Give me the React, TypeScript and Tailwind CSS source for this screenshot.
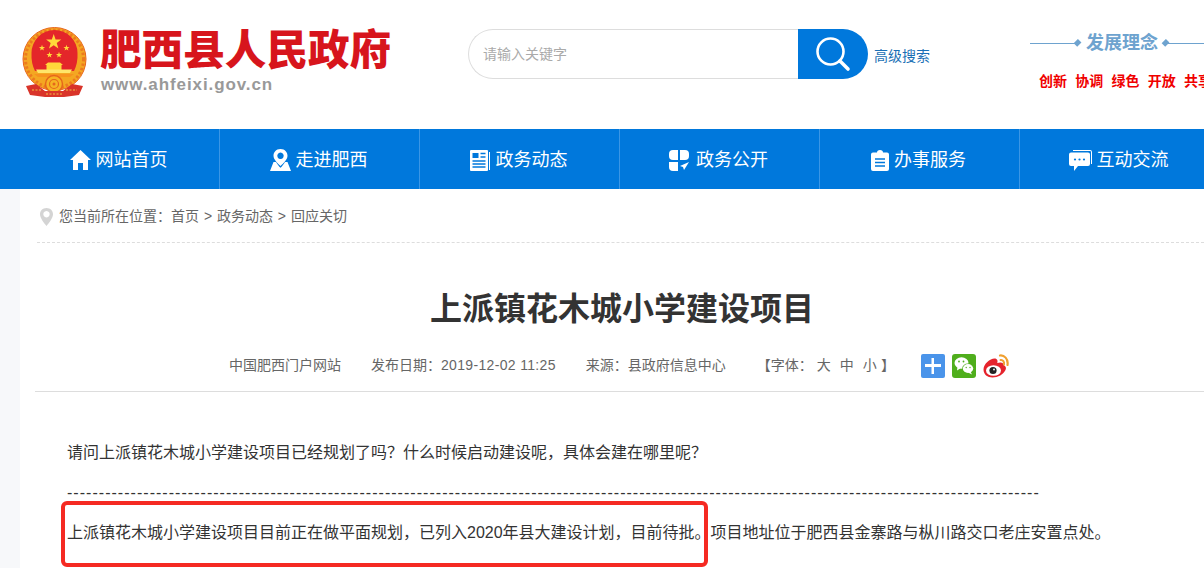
import React from "react";

const Star = ({ x, y, r, rot = 0 }: { x: number; y: number; r: number; rot?: number }) => {
  const pts: string[] = [];
  for (let i = 0; i < 10; i++) {
    const a = (Math.PI / 5) * i - Math.PI / 2 + rot;
    const rr = i % 2 === 0 ? r : r * 0.4;
    pts.push(`${(x + rr * Math.cos(a)).toFixed(2)},${(y + rr * Math.sin(a)).toFixed(2)}`);
  }
  return <polygon points={pts.join(" ")} fill="#ffd83a" />;
};

const Emblem = () => (
  <svg width="66" height="70" viewBox="0 0 66 70" className="shrink-0">
    <circle cx="32.5" cy="32" r="31.5" fill="#f4a722" stroke="#e8641c" strokeWidth="1" />
    <circle cx="32.5" cy="32" r="29" fill="none" stroke="#ec7a1e" strokeWidth="3" strokeDasharray="2.5 2" />
    <path d="M9.5 26 A23 23 0 0 1 55.5 26 Q56 36 52 44 H13 Q9 36 9.5 26Z" fill="#e4262a" />
    <Star x={31.7} y={15} r={8} />
    <Star x={20} y={21} r={3.2} />
    <Star x={44.5} y={21} r={3.2} />
    <Star x={27.5} y={28} r={3.2} />
    <Star x={37} y={28} r={3.2} />
    <path d="M23 38 L26 35.5 L38 35.5 L41 38 L39.5 38 V43 H24.5 V38Z" fill="#ffd83a" />
    <path d="M14 42.5 H50 L48 46 H16Z" fill="#ffe56a" />
    <path d="M12 47 H52 L48 50 H16Z" fill="#f7921e" />
    <circle cx="32" cy="57" r="8.5" fill="#f6b324" stroke="#e5661c" strokeWidth="1.5" />
    <circle cx="32" cy="57" r="4.5" fill="none" stroke="#e5661c" strokeWidth="1.2" />
    <circle cx="32" cy="57" r="1.5" fill="#e5661c" />
    <path d="M4 59 L14 57 L23 64 L41 64 L50 57 L61 59 L57 68 L42 70 L23 70 L8 68Z" fill="#d9342a" />
    <path d="M10 63 H20 M44 63 H55 M24 67 H40" stroke="#f4c040" strokeWidth="1.2" strokeDasharray="2 1.5" />
  </svg>
);

const SearchIcon = () => (
  <svg width="36" height="36" viewBox="0 0 36 36" fill="none" stroke="#fff">
    <circle cx="15.5" cy="15.5" r="13" strokeWidth="2.6" />
    <path d="M25 25 L33 33" strokeWidth="3.6" strokeLinecap="round" />
  </svg>
);

const Home = () => (
  <svg width="21" height="20" viewBox="0 0 21 20" fill="#fff">
    <path d="M10.5 0 L21 10 L18 10 V20 H13 V13 H8 V20 H3 V10 H0Z" />
  </svg>
);

const Pin = () => (
  <svg width="21" height="22" viewBox="0 0 21 22" fill="#fff">
    <path fillRule="evenodd" d="M10.5 0 C5.8 0 3.5 3.5 3.5 6.8 C3.5 10.5 8 15 10.5 17 C13 15 17.5 10.5 17.5 6.8 C17.5 3.5 15.2 0 10.5 0Z M10.5 3.6 A3.2 3.2 0 1 1 10.49 3.6Z" />
    <path d="M3.5 13 L0 22 H21 L17.5 13 L15 13 C13.5 15.5 12 17.5 10.5 18.8 C9 17.5 7.5 15.5 6 13Z" />
  </svg>
);

const News = () => (
  <svg width="20" height="21" viewBox="0 0 20 21">
    <path d="M19 2 H20 V20 H19Z" fill="#fff" />
    <rect x="0" y="0" width="18" height="21" rx="1" fill="#fff" />
    <rect x="2.5" y="3" width="6" height="5" fill="#0078dc" />
    <path d="M10.5 3.5 H15.5 M10.5 7 H15.5 M2.5 11 H15.5 M2.5 14 H15.5 M2.5 17 H15.5" stroke="#0078dc" strokeWidth="1.4" />
  </svg>
);

const Blocks = () => (
  <svg width="20" height="21" viewBox="0 0 20 21" fill="#fff">
    <path d="M4 0 H9 V10 H4 A4 4 0 0 1 0 6 V4 A4 4 0 0 1 4 0Z" />
    <path d="M11 0 H16 A4 4 0 0 1 20 4 V6 A4 4 0 0 1 16 10 H11Z" />
    <path d="M0 12 H9 V21 H4 A4 4 0 0 1 0 17Z" />
    <path d="M20 12 L11 16 L14 17 L15 20Z" />
  </svg>
);

const Clip = () => (
  <svg width="18" height="21" viewBox="0 0 18 21">
    <path d="M2 2.5 H6 A3 2.5 0 0 1 12 2.5 H16 A2 2 0 0 1 18 4.5 V19 A2 2 0 0 1 16 21 H2 A2 2 0 0 1 0 19 V4.5 A2 2 0 0 1 2 2.5Z" fill="#fff" />
    <path d="M4 9 H14 M4 12.5 H14 M4 16 H14" stroke="#0078dc" strokeWidth="1.4" />
  </svg>
);

const Chat = () => (
  <svg width="23" height="21" viewBox="0 0 23 21" fill="#fff">
    <path d="M4 0 H21 A2 2 0 0 1 23 2 V14 H22 V2 A1 1 0 0 0 21 1 H4Z" />
    <path d="M2 2.5 H19 A2 2 0 0 1 21 4.5 V14 A2 2 0 0 1 19 16 H9 L5 21 V16 H2 A2 2 0 0 1 0 14 V4.5 A2 2 0 0 1 2 2.5Z" />
    <circle cx="6" cy="9.5" r="1.1" fill="#0078dc" />
    <circle cx="10.5" cy="9.5" r="1.1" fill="#0078dc" />
    <circle cx="15" cy="9.5" r="1.1" fill="#0078dc" />
  </svg>
);

const LocationGray = () => (
  <svg width="13" height="18" viewBox="0 0 13 18">
    <path fillRule="evenodd" d="M6.5 0 C2.6 0 0 2.8 0 6.2 C0 10 4 15 6.5 18 C9 15 13 10 13 6.2 C13 2.8 10.4 0 6.5 0Z M6.5 3 A3.2 3.2 0 1 1 6.49 3Z" fill="#d4d4d4" />
  </svg>
);

const Share = () => (
  <svg width="24" height="24" viewBox="0 0 24 24">
    <rect width="24" height="24" rx="2" fill="#4a94ea" />
    <path d="M10.5 4 H13 V10 H20 V13 H13 V20 H10.5 V13 H4 V10 H10.5Z" fill="#fff" />
  </svg>
);

const Wechat = () => (
  <svg width="24" height="24" viewBox="0 0 24 24">
    <rect width="24" height="24" rx="3" fill="#4fae1c" />
    <ellipse cx="9.5" cy="9" rx="7" ry="5.8" fill="#fff" />
    <path d="M5.5 12.5 L5 16.5 L9 14Z" fill="#fff" />
    <ellipse cx="16" cy="14.5" rx="5.8" ry="4.9" fill="#4fae1c" />
    <ellipse cx="16" cy="14.5" rx="5.2" ry="4.4" fill="#fff" />
    <path d="M18.5 17.5 L20 20.5 L16 18.5Z" fill="#fff" />
    <circle cx="7" cy="7.5" r="0.9" fill="#4fae1c" />
    <circle cx="11.5" cy="7.5" r="0.9" fill="#4fae1c" />
    <circle cx="14.2" cy="13.5" r="0.7" fill="#4fae1c" />
    <circle cx="18" cy="13.5" r="0.7" fill="#4fae1c" />
  </svg>
);

const Weibo = () => (
  <svg width="26" height="24" viewBox="0 0 26 24">
    <path d="M0.5 15.5 C0.5 10 7 4.5 11.5 4.5 C14.5 4.5 15 7 14.2 9 C17 8 20.5 8 20.5 11 C23 12 23.5 14 22.5 16 C20.5 20.5 15 23.5 9.5 23.5 C4.5 23.5 0.5 20.5 0.5 15.5Z" fill="#e5232c" />
    <ellipse cx="10.5" cy="16.5" rx="7.5" ry="5.3" fill="#fff" />
    <circle cx="10" cy="16.5" r="3.6" fill="#222" />
    <circle cx="11" cy="15.5" r="0.9" fill="#fff" />
    <path d="M17 1.5 C21 1 25.5 4.5 24.5 11" fill="none" stroke="#f0a030" strokeWidth="2.2" strokeLinecap="round" />
    <path d="M17.5 6 C20 5.5 21.5 8 21 10.5" fill="none" stroke="#f0a030" strokeWidth="2" strokeLinecap="round" />
  </svg>
);

const navItems = [
  { icon: <Home />, label: "网站首页", gap: "gap-[5px]" },
  { icon: <Pin />, label: "走进肥西", gap: "gap-[5px]" },
  { icon: <News />, label: "政务动态", gap: "gap-[6px]" },
  { icon: <Blocks />, label: "政务公开", gap: "gap-[7px]" },
  { icon: <Clip />, label: "办事服务", gap: "gap-[5px]" },
  { icon: <Chat />, label: "互动交流", gap: "gap-[5px]" },
];

const Values = ["创新", "协调", "绿色", "开放", "共享"];

export default function App() {
  return (
    <div className="h-[568px] w-[1204px] overflow-hidden bg-white font-['Liberation_Sans','Noto_Sans_CJK_SC',sans-serif] text-[#333]">
      <header className="flex h-[129px] w-[1204px] overflow-hidden">
        <div className="ml-[22px] mt-[27px] w-[66px] shrink-0">
          <Emblem />
        </div>
        <div className="ml-[12px] mt-[26px] w-[368px] shrink-0">
          <div className="whitespace-nowrap text-[41.6px] leading-[50px] font-black text-[#d7151c]">肥西县人民政府</div>
          <div className="ml-px text-[17px] leading-[18px] font-bold tracking-[0.9px] text-[#999]">www.ahfeixi.gov.cn</div>
        </div>
        <div className="mt-[29px] flex h-[50px] w-[400px] shrink-0">
          <div className="flex h-[50px] w-[330px] items-center rounded-l-[25px] border border-r-0 border-[#ddd] pt-[1px] pl-[14px] text-[14px] text-[#aaa]">
            请输入关键字
          </div>
          <div className="flex h-[50px] w-[70px] items-center justify-center rounded-r-[25px] bg-[#0078dc]">
            <SearchIcon />
          </div>
        </div>
        <div className="ml-[6px] mt-[46px] w-[156px] shrink-0 text-[14px] leading-[20px] text-[#1a6fb5]">高级搜索</div>
        <div className="mt-[30px] w-[174px] shrink-0">
          <div className="flex h-[26px] items-center">
            <div className="h-px w-[50px] bg-[#6ea3cf]" />
            <div className="h-[6px] w-[6px] rotate-45 bg-[#6ea3cf]" />
            <div className="ml-[6px] text-[18px] font-bold text-[#6ea3cf] whitespace-nowrap">发展理念</div>
            <div className="ml-[5px] h-[6px] w-[6px] rotate-45 bg-[#6ea3cf]" />
            <div className="h-px w-[40px] bg-[#6ea3cf]" />
          </div>
          <div className="mt-[15px] ml-[9px] flex gap-[8.25px] text-[14px] leading-[20px] font-bold whitespace-nowrap text-[#f00000]">
            {Values.map((v) => (
              <span key={v}>{v}</span>
            ))}
          </div>
        </div>
      </header>

      <nav className="flex h-[60px] w-[1204px] overflow-hidden bg-[#0078dc] pl-[20px]">
        {navItems.map((n) => (
          <div
            key={n.label}
            className={`flex h-[60px] w-[200px] shrink-0 items-center justify-center border-r border-[#3a96e6] pt-[2px] pr-[2px] ${n.gap} text-[18px] text-white`}
          >
            {n.icon}
            <span className="whitespace-nowrap">{n.label}</span>
          </div>
        ))}
      </nav>

      <div className="flex h-[379px]">
        <div className="h-full w-[20px] shrink-0 bg-[#f7f8fa]" />
        <main className="relative w-[1184px] shrink-0">
          <div className="ml-[17px] flex h-[54px] items-center gap-[6px] border-b border-dashed border-[#ddd] pt-[2px] pl-[3px] text-[14px] text-[#666]">
            <LocationGray />
            <span className="whitespace-nowrap [word-spacing:1px]">您当前所在位置：首页 &gt; 政务动态 &gt; 回应关切</span>
          </div>
          <h1 className="mt-[40px] pl-[20px] text-center text-[32px] leading-[52px] font-bold text-[#333]">
            上派镇花木城小学建设项目
          </h1>
          <div className="ml-[15px] mt-[2px] flex h-[55px] items-center border-b border-[#ddd] pt-[2px] pl-[194px] text-[14px] whitespace-nowrap text-[#666]">
            <span>中国肥西门户网站</span>
            <span className="ml-[30px]">
              发布日期：<span className="tracking-[0.33px]">2019-12-02 11:25</span>
            </span>
            <span className="ml-[30px]">来源：县政府信息中心</span>
            <span className="ml-[31px] w-[164px]">
              【字体：&nbsp;<span className="tracking-[0.4px]">大&nbsp;&nbsp;中&nbsp;&nbsp;小</span>&nbsp;】
            </span>
            <div className="mt-[2px] flex items-center gap-[7px]">
              <Share />
              <Wechat />
              <Weibo />
            </div>
          </div>
          <div className="ml-[47px] mt-[41px] text-[16px] leading-[40px] whitespace-nowrap text-[#333]">
            <p>请问上派镇花木城小学建设项目已经规划了吗？什么时候启动建设呢，具体会建在哪里呢？</p>
            <p className="tracking-[1.03px]">{"-".repeat(153)}</p>
            <p>
              上派镇花木城小学建设项目目前正在做平面规划，已列入2020年县大建设计划，目前待批。项目地址位于肥西县金寨路与枞川路交口老庄安置点处。
            </p>
          </div>
          <div className="absolute left-[41px] top-[312px] h-[66px] w-[647px] rounded-[6px] border-[4px] border-[#f52a22]" />
        </main>
      </div>
    </div>
  );
}
